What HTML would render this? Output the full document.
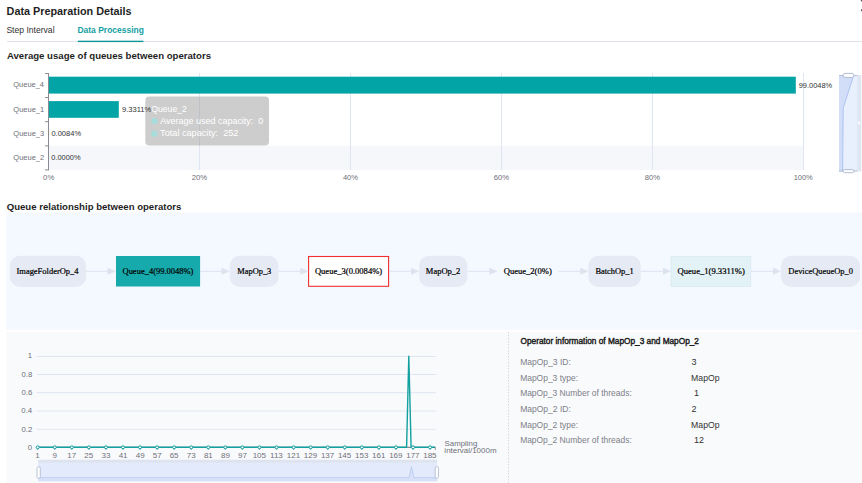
<!DOCTYPE html>
<html><head><meta charset="utf-8">
<style>
html,body{margin:0;padding:0;width:862px;height:483px;overflow:hidden;background:#fff;}
svg{position:absolute;left:0;top:0;}
</style></head><body>
<svg width="862" height="483" viewBox="0 0 862 483">
  <!-- header lines -->
  <rect x="7" y="41" width="855" height="1" fill="#dfe3ea"/>
  <rect x="77.8" y="40.7" width="65.6" height="1.4" fill="#0d9696"/>
  <rect x="860.8" y="-0.5" width="2" height="2" rx="1" fill="#4a4f5c"/>
  <rect x="860.8" y="9.2" width="2" height="2" rx="1" fill="#4a4f5c"/>

  <!-- bar chart -->
  <rect x="49" y="145.8" width="754.4" height="24.1" fill="#f5f7fb"/>
  <g stroke="#e0e6f1" stroke-width="1">
    <line x1="199.5" y1="73" x2="199.5" y2="170"/>
    <line x1="350.5" y1="73" x2="350.5" y2="170"/>
    <line x1="501.5" y1="73" x2="501.5" y2="170"/>
    <line x1="652.5" y1="73" x2="652.5" y2="170"/>
    <line x1="803.5" y1="73" x2="803.5" y2="170"/>
  </g>
  <g stroke="#888b93" stroke-width="1">
    <line x1="48.5" y1="73" x2="48.5" y2="170.4"/>
    <line x1="45" y1="73.5" x2="48.5" y2="73.5"/>
    <line x1="45" y1="97.5" x2="48.5" y2="97.5"/>
    <line x1="45" y1="121.7" x2="48.5" y2="121.7"/>
    <line x1="45" y1="145.9" x2="48.5" y2="145.9"/>
    <line x1="45" y1="169.9" x2="48.5" y2="169.9"/>
  </g>
  <rect x="49" y="76.7" width="746.8" height="16.9" fill="#02a4a6"/>
  <rect x="49" y="101.1" width="69.8" height="16.7" fill="#02a4a6"/>

  <!-- tooltip -->
  <rect x="145.3" y="96.5" width="123.7" height="49" rx="4" fill="rgba(160,160,160,0.52)"/>
  <circle cx="154.3" cy="121.1" r="3.1" fill="#a6dcdc"/>
  <circle cx="154.3" cy="133.7" r="3.1" fill="#a6dcdc"/>

  <!-- right dataZoom slider -->
  <rect x="839" y="75.2" width="22.3" height="96.2" fill="#dfe6f2"/>
  <rect x="839" y="75.2" width="18.3" height="96.2" fill="#e8effd"/>
  <path d="M839 75.2 L853.5 75.2 L843.2 108 L842.6 171.4 L839 171.4 Z" fill="#d2def8"/>
  <path d="M853.5 76 L843.2 108 L842.6 171.4" fill="none" stroke="#a8c0f2" stroke-width="0.9"/>
  <line x1="839" y1="75.5" x2="857.3" y2="75.5" stroke="#b4bfd6" stroke-width="1"/>
  <line x1="839" y1="171" x2="857.3" y2="171" stroke="#b4bfd6" stroke-width="1"/>
  <rect x="843" y="73.4" width="11" height="4" rx="2" fill="#fff" stroke="#a9b5cf" stroke-width="0.9"/>
  <rect x="843" y="169.6" width="11" height="3.1" rx="1.5" fill="#fff" stroke="#a9b5cf" stroke-width="0.9"/>
  <rect x="858.5" y="121.5" width="1.6" height="3" fill="#ffffff"/>

  <!-- graph -->
  <rect x="6.5" y="212.5" width="856" height="117.2" fill="#f4f8ff"/>
  <g fill="#e6eaf5">
    <rect x="10" y="255.8" width="76" height="31.2" rx="10"/>
    <rect x="229.8" y="255.8" width="48.7" height="31.2" rx="10"/>
    <rect x="419.1" y="255.8" width="48.3" height="31.2" rx="10"/>
    <rect x="588.4" y="255.8" width="52.4" height="31.2" rx="10"/>
    <rect x="781" y="255.8" width="79" height="31.2" rx="10"/>
  </g>
  <rect x="116" y="256" width="84.1" height="30.5" fill="#17aaac"/>
  <rect x="308.6" y="256.5" width="80" height="29.8" fill="#ffffff" stroke="#ee3030" stroke-width="1.1"/>
  <rect x="671" y="256.4" width="79.8" height="30.2" fill="#e3f2f6" stroke="#d3eaef" stroke-width="0.7"/>
  <g stroke="#dde2ef" stroke-width="1">
    <line x1="86" y1="271.3" x2="108" y2="271.3"/>
    <line x1="200" y1="271.3" x2="222" y2="271.3"/>
    <line x1="278.5" y1="271.3" x2="301" y2="271.3"/>
    <line x1="389" y1="271.3" x2="412" y2="271.3"/>
    <line x1="467.5" y1="271.3" x2="490" y2="271.3"/>
    <line x1="558.5" y1="271.3" x2="581" y2="271.3"/>
    <line x1="641" y1="271.3" x2="664" y2="271.3"/>
    <line x1="751" y1="271.3" x2="774" y2="271.3"/>
  </g>
  <g fill="#dde2ef">
    <path d="M107.5 267.8 L116 271.3 L107.5 274.8 Z"/>
    <path d="M221.5 267.8 L229.8 271.3 L221.5 274.8 Z"/>
    <path d="M300.3 267.8 L308.6 271.3 L300.3 274.8 Z"/>
    <path d="M411 267.8 L419.1 271.3 L411 274.8 Z"/>
    <path d="M489.3 267.8 L497.5 271.3 L489.3 274.8 Z"/>
    <path d="M580.3 267.8 L588.4 271.3 L580.3 274.8 Z"/>
    <path d="M663 267.8 L671 271.3 L663 274.8 Z"/>
    <path d="M773 267.8 L781 271.3 L773 274.8 Z"/>
  </g>

  <!-- bottom panel -->
  <rect x="6.5" y="332" width="856" height="151" fill="#f9fafc"/>
  <line x1="508.5" y1="332" x2="508.5" y2="483" stroke="#d5d8de" stroke-width="1" stroke-dasharray="1.5,1.5"/>

  <!-- line chart -->
  <g stroke="#e0e6f1" stroke-width="1">
    <line x1="36.7" y1="356.5" x2="436.2" y2="356.5"/>
    <line x1="36.7" y1="374.5" x2="436.2" y2="374.5"/>
    <line x1="36.7" y1="392.7" x2="436.2" y2="392.7"/>
    <line x1="36.7" y1="411" x2="436.2" y2="411"/>
    <line x1="36.7" y1="429.3" x2="436.2" y2="429.3"/>
  </g>
  <line x1="36.7" y1="447.3" x2="435.5" y2="447.3" stroke="#6e7079" stroke-width="1"/>
  <g stroke="#6e7079" stroke-width="0.8"><line x1="37.70" y1="447.3" x2="37.70" y2="449.8"/><line x1="54.76" y1="447.3" x2="54.76" y2="449.8"/><line x1="71.82" y1="447.3" x2="71.82" y2="449.8"/><line x1="88.88" y1="447.3" x2="88.88" y2="449.8"/><line x1="105.94" y1="447.3" x2="105.94" y2="449.8"/><line x1="123.00" y1="447.3" x2="123.00" y2="449.8"/><line x1="140.06" y1="447.3" x2="140.06" y2="449.8"/><line x1="157.12" y1="447.3" x2="157.12" y2="449.8"/><line x1="174.18" y1="447.3" x2="174.18" y2="449.8"/><line x1="191.24" y1="447.3" x2="191.24" y2="449.8"/><line x1="208.30" y1="447.3" x2="208.30" y2="449.8"/><line x1="225.36" y1="447.3" x2="225.36" y2="449.8"/><line x1="242.42" y1="447.3" x2="242.42" y2="449.8"/><line x1="259.48" y1="447.3" x2="259.48" y2="449.8"/><line x1="276.54" y1="447.3" x2="276.54" y2="449.8"/><line x1="293.60" y1="447.3" x2="293.60" y2="449.8"/><line x1="310.66" y1="447.3" x2="310.66" y2="449.8"/><line x1="327.72" y1="447.3" x2="327.72" y2="449.8"/><line x1="344.78" y1="447.3" x2="344.78" y2="449.8"/><line x1="361.84" y1="447.3" x2="361.84" y2="449.8"/><line x1="378.90" y1="447.3" x2="378.90" y2="449.8"/><line x1="395.96" y1="447.3" x2="395.96" y2="449.8"/><line x1="413.02" y1="447.3" x2="413.02" y2="449.8"/><line x1="430.08" y1="447.3" x2="430.08" y2="449.8"/><line x1="435.3" y1="447.3" x2="435.3" y2="449.8"/></g>
  <polyline fill="none" stroke="#12a0a0" stroke-width="1.4" stroke-linejoin="round"
    points="37.7,447.3 406.6,447.3 408.8,356.2 411.1,447.3 435,447.3"/>
  <g fill="#f8fcfc" stroke="#12a0a0" stroke-width="1"><circle cx="37.70" cy="447.3" r="1.5"/><circle cx="54.76" cy="447.3" r="1.5"/><circle cx="71.82" cy="447.3" r="1.5"/><circle cx="88.88" cy="447.3" r="1.5"/><circle cx="105.94" cy="447.3" r="1.5"/><circle cx="123.00" cy="447.3" r="1.5"/><circle cx="140.06" cy="447.3" r="1.5"/><circle cx="157.12" cy="447.3" r="1.5"/><circle cx="174.18" cy="447.3" r="1.5"/><circle cx="191.24" cy="447.3" r="1.5"/><circle cx="208.30" cy="447.3" r="1.5"/><circle cx="225.36" cy="447.3" r="1.5"/><circle cx="242.42" cy="447.3" r="1.5"/><circle cx="259.48" cy="447.3" r="1.5"/><circle cx="276.54" cy="447.3" r="1.5"/><circle cx="293.60" cy="447.3" r="1.5"/><circle cx="310.66" cy="447.3" r="1.5"/><circle cx="327.72" cy="447.3" r="1.5"/><circle cx="344.78" cy="447.3" r="1.5"/><circle cx="361.84" cy="447.3" r="1.5"/><circle cx="378.90" cy="447.3" r="1.5"/><circle cx="395.96" cy="447.3" r="1.5"/><circle cx="413.02" cy="447.3" r="1.5"/><circle cx="430.08" cy="447.3" r="1.5"/></g>

  <!-- bottom dataZoom -->
  <rect x="38" y="459.7" width="399.2" height="3.2" fill="#dde4f0"/>
  <rect x="38" y="462.9" width="399.2" height="18.3" fill="#e3eafb"/>
  <path d="M38 477.7 L409 477.7 L411.5 466.7 L413.8 477.7 L437.2 477.7 L437.2 481.2 L38 481.2 Z" fill="#d7e1f8"/>
  <path d="M38 477.7 L409 477.7 L411.5 466.7 L413.8 477.7 L437.2 477.7" fill="none" stroke="#b5c8f0" stroke-width="0.8"/>
  <rect x="37" y="466.7" width="3.3" height="11.5" rx="1.5" fill="#fff" stroke="#a9b5cf" stroke-width="0.8"/>
  <rect x="435.2" y="466.7" width="3.3" height="11.5" rx="1.5" fill="#fff" stroke="#a9b5cf" stroke-width="0.8"/>

<text x="6.61" y="15.40" textLength="125.00" lengthAdjust="spacingAndGlyphs" font-family="'Liberation Sans', sans-serif" font-size="11" font-weight="700" fill="#1f1f1f">Data Preparation Details</text>
<text x="6.41" y="33.00" textLength="48.13" lengthAdjust="spacingAndGlyphs" font-family="'Liberation Sans', sans-serif" font-size="8.8" font-weight="400" fill="#303030">Step Interval</text>
<text x="77.42" y="33.00" textLength="66.54" lengthAdjust="spacingAndGlyphs" font-family="'Liberation Sans', sans-serif" font-size="8.8" font-weight="700" fill="#15a0a3">Data Processing</text>
<text x="6.90" y="58.70" textLength="204.09" lengthAdjust="spacingAndGlyphs" font-family="'Liberation Sans', sans-serif" font-size="9.7" font-weight="700" fill="#1f1f1f">Average usage of queues between operators</text>
<text x="6.70" y="209.90" textLength="174.69" lengthAdjust="spacingAndGlyphs" font-family="'Liberation Sans', sans-serif" font-size="9.7" font-weight="700" fill="#1f1f1f">Queue relationship between operators</text>
<text x="13.32" y="87.00" textLength="30.62" lengthAdjust="spacingAndGlyphs" font-family="'Liberation Sans', sans-serif" font-size="8" font-weight="400" fill="#6e7079">Queue_4</text>
<text x="13.32" y="111.60" textLength="30.81" lengthAdjust="spacingAndGlyphs" font-family="'Liberation Sans', sans-serif" font-size="8" font-weight="400" fill="#6e7079">Queue_1</text>
<text x="13.32" y="135.70" textLength="30.81" lengthAdjust="spacingAndGlyphs" font-family="'Liberation Sans', sans-serif" font-size="8" font-weight="400" fill="#6e7079">Queue_3</text>
<text x="13.32" y="159.70" textLength="30.81" lengthAdjust="spacingAndGlyphs" font-family="'Liberation Sans', sans-serif" font-size="8" font-weight="400" fill="#6e7079">Queue_2</text>
<text x="798.72" y="87.70" textLength="33.48" lengthAdjust="spacingAndGlyphs" font-family="'Liberation Sans', sans-serif" font-size="8" font-weight="400" fill="#333333">99.0048%</text>
<text x="122.02" y="111.90" textLength="29.29" lengthAdjust="spacingAndGlyphs" font-family="'Liberation Sans', sans-serif" font-size="8" font-weight="400" fill="#333333">9.3311%</text>
<text x="51.42" y="135.90" textLength="29.68" lengthAdjust="spacingAndGlyphs" font-family="'Liberation Sans', sans-serif" font-size="8" font-weight="400" fill="#333333">0.0084%</text>
<text x="51.32" y="159.70" textLength="29.28" lengthAdjust="spacingAndGlyphs" font-family="'Liberation Sans', sans-serif" font-size="8" font-weight="400" fill="#333333">0.0000%</text>
<text x="43.11" y="180.40" textLength="11.09" lengthAdjust="spacingAndGlyphs" font-family="'Liberation Sans', sans-serif" font-size="8" font-weight="400" fill="#6e7079">0%</text>
<text x="191.72" y="180.40" textLength="15.39" lengthAdjust="spacingAndGlyphs" font-family="'Liberation Sans', sans-serif" font-size="8" font-weight="400" fill="#6e7079">20%</text>
<text x="342.91" y="180.40" textLength="15.10" lengthAdjust="spacingAndGlyphs" font-family="'Liberation Sans', sans-serif" font-size="8" font-weight="400" fill="#6e7079">40%</text>
<text x="493.72" y="180.40" textLength="15.39" lengthAdjust="spacingAndGlyphs" font-family="'Liberation Sans', sans-serif" font-size="8" font-weight="400" fill="#6e7079">60%</text>
<text x="644.81" y="180.40" textLength="15.29" lengthAdjust="spacingAndGlyphs" font-family="'Liberation Sans', sans-serif" font-size="8" font-weight="400" fill="#6e7079">80%</text>
<text x="793.69" y="180.40" textLength="19.06" lengthAdjust="spacingAndGlyphs" font-family="'Liberation Sans', sans-serif" font-size="8" font-weight="400" fill="#6e7079">100%</text>
<text x="151.31" y="112.00" textLength="35.48" lengthAdjust="spacingAndGlyphs" font-family="'Liberation Sans', sans-serif" font-size="8.8" font-weight="400" fill="#ffffff">Queue_2</text>
<text x="160.30" y="124.10" textLength="103.00" lengthAdjust="spacingAndGlyphs" font-family="'Liberation Sans', sans-serif" font-size="9" font-weight="400" fill="#ffffff">Average used capacity:  0</text>
<text x="160.10" y="136.30" textLength="78.32" lengthAdjust="spacingAndGlyphs" font-family="'Liberation Sans', sans-serif" font-size="9" font-weight="400" fill="#ffffff">Total capacity:  252</text>
<text x="16.51" y="274.40" textLength="61.99" lengthAdjust="spacingAndGlyphs" font-family="'Liberation Serif', serif" font-size="8.6" font-weight="400" fill="#000000" stroke="#000000" stroke-width="0.22">ImageFolderOp_4</text>
<text x="122.50" y="274.40" textLength="70.96" lengthAdjust="spacingAndGlyphs" font-family="'Liberation Serif', serif" font-size="8.6" font-weight="400" fill="#000000" stroke="#000000" stroke-width="0.22">Queue_4(99.0048%)</text>
<text x="237.31" y="274.40" textLength="33.99" lengthAdjust="spacingAndGlyphs" font-family="'Liberation Serif', serif" font-size="8.6" font-weight="400" fill="#000000" stroke="#000000" stroke-width="0.22">MapOp_3</text>
<text x="314.90" y="274.40" textLength="67.26" lengthAdjust="spacingAndGlyphs" font-family="'Liberation Serif', serif" font-size="8.6" font-weight="400" fill="#000000" stroke="#000000" stroke-width="0.22">Queue_3(0.0084%)</text>
<text x="425.80" y="274.40" textLength="34.60" lengthAdjust="spacingAndGlyphs" font-family="'Liberation Serif', serif" font-size="8.6" font-weight="400" fill="#000000" stroke="#000000" stroke-width="0.22">MapOp_2</text>
<text x="503.70" y="274.40" textLength="48.06" lengthAdjust="spacingAndGlyphs" font-family="'Liberation Serif', serif" font-size="8.6" font-weight="400" fill="#000000" stroke="#000000" stroke-width="0.22">Queue_2(0%)</text>
<text x="595.40" y="274.40" textLength="38.28" lengthAdjust="spacingAndGlyphs" font-family="'Liberation Serif', serif" font-size="8.6" font-weight="400" fill="#000000" stroke="#000000" stroke-width="0.22">BatchOp_1</text>
<text x="677.50" y="274.40" textLength="67.26" lengthAdjust="spacingAndGlyphs" font-family="'Liberation Serif', serif" font-size="8.6" font-weight="400" fill="#000000" stroke="#000000" stroke-width="0.22">Queue_1(9.3311%)</text>
<text x="788.30" y="274.40" textLength="64.69" lengthAdjust="spacingAndGlyphs" font-family="'Liberation Serif', serif" font-size="8.6" font-weight="400" fill="#000000" stroke="#000000" stroke-width="0.22">DeviceQueueOp_0</text>
<text x="27.65" y="357.80" textLength="4.34" lengthAdjust="spacingAndGlyphs" font-family="'Liberation Sans', sans-serif" font-size="7.8" font-weight="400" fill="#6e7079">1</text>
<text x="21.50" y="376.90" textLength="10.84" lengthAdjust="spacingAndGlyphs" font-family="'Liberation Sans', sans-serif" font-size="7.8" font-weight="400" fill="#6e7079">0.8</text>
<text x="21.45" y="395.20" textLength="10.84" lengthAdjust="spacingAndGlyphs" font-family="'Liberation Sans', sans-serif" font-size="7.8" font-weight="400" fill="#6e7079">0.6</text>
<text x="21.35" y="413.40" textLength="10.84" lengthAdjust="spacingAndGlyphs" font-family="'Liberation Sans', sans-serif" font-size="7.8" font-weight="400" fill="#6e7079">0.4</text>
<text x="21.40" y="431.60" textLength="10.84" lengthAdjust="spacingAndGlyphs" font-family="'Liberation Sans', sans-serif" font-size="7.8" font-weight="400" fill="#6e7079">0.2</text>
<text x="27.70" y="449.60" textLength="4.34" lengthAdjust="spacingAndGlyphs" font-family="'Liberation Sans', sans-serif" font-size="7.8" font-weight="400" fill="#6e7079">0</text>
<text x="35.35" y="458.00" textLength="4.45" lengthAdjust="spacingAndGlyphs" font-family="'Liberation Sans', sans-serif" font-size="8" font-weight="400" fill="#6e7079">1</text>
<text x="52.56" y="458.00" textLength="4.45" lengthAdjust="spacingAndGlyphs" font-family="'Liberation Sans', sans-serif" font-size="8" font-weight="400" fill="#6e7079">9</text>
<text x="67.25" y="458.00" textLength="8.90" lengthAdjust="spacingAndGlyphs" font-family="'Liberation Sans', sans-serif" font-size="8" font-weight="400" fill="#6e7079">17</text>
<text x="84.36" y="458.00" textLength="8.90" lengthAdjust="spacingAndGlyphs" font-family="'Liberation Sans', sans-serif" font-size="8" font-weight="400" fill="#6e7079">25</text>
<text x="101.52" y="458.00" textLength="8.90" lengthAdjust="spacingAndGlyphs" font-family="'Liberation Sans', sans-serif" font-size="8" font-weight="400" fill="#6e7079">33</text>
<text x="118.68" y="458.00" textLength="8.90" lengthAdjust="spacingAndGlyphs" font-family="'Liberation Sans', sans-serif" font-size="8" font-weight="400" fill="#6e7079">41</text>
<text x="135.74" y="458.00" textLength="8.90" lengthAdjust="spacingAndGlyphs" font-family="'Liberation Sans', sans-serif" font-size="8" font-weight="400" fill="#6e7079">49</text>
<text x="152.70" y="458.00" textLength="8.90" lengthAdjust="spacingAndGlyphs" font-family="'Liberation Sans', sans-serif" font-size="8" font-weight="400" fill="#6e7079">57</text>
<text x="169.66" y="458.00" textLength="8.90" lengthAdjust="spacingAndGlyphs" font-family="'Liberation Sans', sans-serif" font-size="8" font-weight="400" fill="#6e7079">65</text>
<text x="186.77" y="458.00" textLength="8.90" lengthAdjust="spacingAndGlyphs" font-family="'Liberation Sans', sans-serif" font-size="8" font-weight="400" fill="#6e7079">73</text>
<text x="203.88" y="458.00" textLength="8.90" lengthAdjust="spacingAndGlyphs" font-family="'Liberation Sans', sans-serif" font-size="8" font-weight="400" fill="#6e7079">81</text>
<text x="220.94" y="458.00" textLength="8.90" lengthAdjust="spacingAndGlyphs" font-family="'Liberation Sans', sans-serif" font-size="8" font-weight="400" fill="#6e7079">89</text>
<text x="238.00" y="458.00" textLength="8.90" lengthAdjust="spacingAndGlyphs" font-family="'Liberation Sans', sans-serif" font-size="8" font-weight="400" fill="#6e7079">97</text>
<text x="252.63" y="458.00" textLength="13.35" lengthAdjust="spacingAndGlyphs" font-family="'Liberation Sans', sans-serif" font-size="8" font-weight="400" fill="#6e7079">105</text>
<text x="270.04" y="458.00" textLength="12.75" lengthAdjust="spacingAndGlyphs" font-family="'Liberation Sans', sans-serif" font-size="8" font-weight="400" fill="#6e7079">113</text>
<text x="286.80" y="458.00" textLength="13.35" lengthAdjust="spacingAndGlyphs" font-family="'Liberation Sans', sans-serif" font-size="8" font-weight="400" fill="#6e7079">121</text>
<text x="303.86" y="458.00" textLength="13.35" lengthAdjust="spacingAndGlyphs" font-family="'Liberation Sans', sans-serif" font-size="8" font-weight="400" fill="#6e7079">129</text>
<text x="320.92" y="458.00" textLength="13.35" lengthAdjust="spacingAndGlyphs" font-family="'Liberation Sans', sans-serif" font-size="8" font-weight="400" fill="#6e7079">137</text>
<text x="337.93" y="458.00" textLength="13.35" lengthAdjust="spacingAndGlyphs" font-family="'Liberation Sans', sans-serif" font-size="8" font-weight="400" fill="#6e7079">145</text>
<text x="355.04" y="458.00" textLength="13.35" lengthAdjust="spacingAndGlyphs" font-family="'Liberation Sans', sans-serif" font-size="8" font-weight="400" fill="#6e7079">153</text>
<text x="372.10" y="458.00" textLength="13.35" lengthAdjust="spacingAndGlyphs" font-family="'Liberation Sans', sans-serif" font-size="8" font-weight="400" fill="#6e7079">161</text>
<text x="389.16" y="458.00" textLength="13.35" lengthAdjust="spacingAndGlyphs" font-family="'Liberation Sans', sans-serif" font-size="8" font-weight="400" fill="#6e7079">169</text>
<text x="406.22" y="458.00" textLength="13.35" lengthAdjust="spacingAndGlyphs" font-family="'Liberation Sans', sans-serif" font-size="8" font-weight="400" fill="#6e7079">177</text>
<text x="423.23" y="458.00" textLength="13.35" lengthAdjust="spacingAndGlyphs" font-family="'Liberation Sans', sans-serif" font-size="8" font-weight="400" fill="#6e7079">185</text>
<text x="444.59" y="446.10" textLength="32.70" lengthAdjust="spacingAndGlyphs" font-family="'Liberation Sans', sans-serif" font-size="7.7" font-weight="400" fill="#6e7079">Sampling</text>
<text x="444.38" y="452.80" textLength="52.14" lengthAdjust="spacingAndGlyphs" font-family="'Liberation Sans', sans-serif" font-size="7.7" font-weight="400" fill="#6e7079">interval/1000m</text>
<text x="520.60" y="344.00" textLength="178.36" lengthAdjust="spacingAndGlyphs" font-family="'Liberation Sans', sans-serif" font-size="8.4" font-weight="400" fill="#1a1a1a" stroke="#1a1a1a" stroke-width="0.4">Operator information of MapOp_3 and MapOp_2</text>
<text x="520.14" y="365.10" textLength="50.72" lengthAdjust="spacingAndGlyphs" font-family="'Liberation Sans', sans-serif" font-size="9" font-weight="400" fill="#7d8088">MapOp_3 ID:</text>
<text x="691.45" y="365.10" textLength="5.01" lengthAdjust="spacingAndGlyphs" font-family="'Liberation Sans', sans-serif" font-size="9" font-weight="400" fill="#333333">3</text>
<text x="520.14" y="380.80" textLength="57.91" lengthAdjust="spacingAndGlyphs" font-family="'Liberation Sans', sans-serif" font-size="9" font-weight="400" fill="#7d8088">MapOp_3 type:</text>
<text x="691.12" y="380.80" textLength="28.47" lengthAdjust="spacingAndGlyphs" font-family="'Liberation Sans', sans-serif" font-size="9" font-weight="400" fill="#333333">MapOp</text>
<text x="520.14" y="396.40" textLength="111.61" lengthAdjust="spacingAndGlyphs" font-family="'Liberation Sans', sans-serif" font-size="9" font-weight="400" fill="#7d8088">MapOp_3 Number of threads:</text>
<text x="693.95" y="396.40" textLength="5.01" lengthAdjust="spacingAndGlyphs" font-family="'Liberation Sans', sans-serif" font-size="9" font-weight="400" fill="#333333">1</text>
<text x="520.14" y="412.00" textLength="50.72" lengthAdjust="spacingAndGlyphs" font-family="'Liberation Sans', sans-serif" font-size="9" font-weight="400" fill="#7d8088">MapOp_2 ID:</text>
<text x="691.45" y="412.00" textLength="5.01" lengthAdjust="spacingAndGlyphs" font-family="'Liberation Sans', sans-serif" font-size="9" font-weight="400" fill="#333333">2</text>
<text x="520.14" y="427.60" textLength="57.91" lengthAdjust="spacingAndGlyphs" font-family="'Liberation Sans', sans-serif" font-size="9" font-weight="400" fill="#7d8088">MapOp_2 type:</text>
<text x="691.12" y="427.60" textLength="28.47" lengthAdjust="spacingAndGlyphs" font-family="'Liberation Sans', sans-serif" font-size="9" font-weight="400" fill="#333333">MapOp</text>
<text x="520.14" y="443.20" textLength="111.61" lengthAdjust="spacingAndGlyphs" font-family="'Liberation Sans', sans-serif" font-size="9" font-weight="400" fill="#7d8088">MapOp_2 Number of threads:</text>
<text x="694.05" y="443.20" textLength="10.01" lengthAdjust="spacingAndGlyphs" font-family="'Liberation Sans', sans-serif" font-size="9" font-weight="400" fill="#333333">12</text>
</svg>
</body></html>
